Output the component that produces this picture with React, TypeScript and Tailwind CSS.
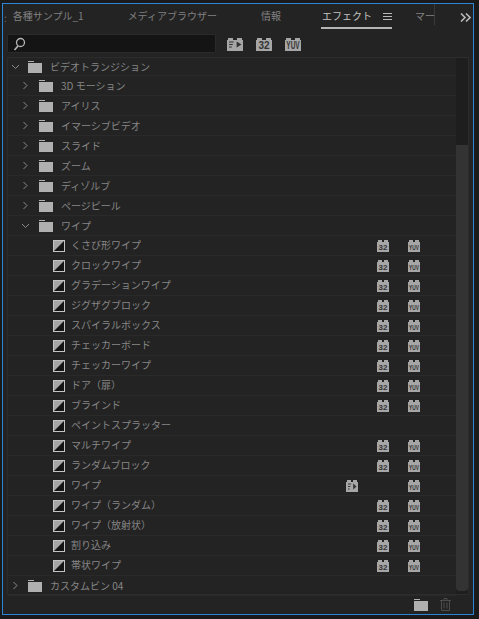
import React from "react";

const font = { fontFamily: '"Noto Sans CJK JP", "Noto Sans", sans-serif' };

function Lego({ w = 12, h = 13, label, fill = "#a6a6a6", size = 7, ink = "#333333", sx = 1 }: { w?: number; h?: number; label: string; fill?: string; size?: number; ink?: string; sx?: number }) {
  const t = Math.round(w * 0.4);
  const g = w - t * 2;
  return (
    <svg width={w} height={h} viewBox={`0 0 ${w} ${h}`} className="block">
      <path d={`M0 3H1V1H${t}V3H${t + g}V1H${w - 1}V3H${w}V${h}H0Z`} fill={fill} />
      <text transform={`translate(${w / 2} ${h - 2.5}) scale(${sx} 1)`} textAnchor="middle" fontSize={size} fontFamily="Liberation Sans, sans-serif" fontWeight="700" fill={ink}>{label}</text>
    </svg>
  );
}

function Accel({ w = 12, h = 13, fill = "#a6a6a6" }: { w?: number; h?: number; fill?: string }) {
  const t = Math.round(w * 0.4);
  const g = w - t * 2;
  return (
    <svg width={w} height={h} viewBox={`0 0 ${w} ${h}`} className="block">
      <path d={`M0 3H1V1H${t}V3H${t + g}V1H${w - 1}V3H${w}V${h}H0Z`} fill={fill} />
      <path d={`M2 5H${w * 0.42}M2 7.5H${w * 0.36}M2 10H${w * 0.3}`} stroke="#333333" strokeWidth="1" />
      <path d={`M${w * 0.6} 4.5L${w - 1.5} 7.5L${w * 0.6} 10.5Z`} fill="#333333" />
    </svg>
  );
}

function Folder() {
  return (
    <svg width={14} height={12} viewBox="0 0 14 12" className="block shrink-0">
      <rect x="0" y="0" width="6" height="1" fill="#b0b0b0" />
      <rect x="0" y="2" width="14" height="10" fill="#b0b0b0" />
    </svg>
  );
}

function Preset() {
  return (
    <svg width={12} height={12} viewBox="0 0 12 12" className="block shrink-0">
      <rect x="0.5" y="0.5" width="11" height="11" fill="#141414" stroke="#c4c4c4" />
      <path d="M1 1H11L1 11Z" fill="#a6a6a6" />
    </svg>
  );
}

function Chevron({ open }: { open: boolean }) {
  return (
    <svg width={9} height={9} viewBox="0 0 9 9" className="block shrink-0">
      {open ? (
        <path d="M1 3L4.5 6.5L8 3" fill="none" stroke="#8a8a8a" strokeWidth="1" />
      ) : (
        <path d="M2.5 1L6 4.5L2.5 8" fill="none" stroke="#8a8a8a" strokeWidth="1" />
      )}
    </svg>
  );
}

function FolderRow({ level, open, label, first }: { level: number; open: boolean; label: string; first?: boolean }) {
  return (
    <div className={`flex shrink-0 items-center border-b border-[#2a2a2a] ${first ? "h-[18px]" : "h-5"} ${level === 0 ? "pl-[3px]" : "pl-[13px]"}`}>
      <Chevron open={open} />
      <div className={level === 0 ? "ml-[8px]" : "ml-[9px]"}><Folder /></div>
      <span className="ml-[8px] text-[10px] leading-none text-[#868686]">{label}</span>
    </div>
  );
}

function EffectRow({ label, acc, b32, yuv }: { label: string; acc?: boolean; b32?: boolean; yuv?: boolean }) {
  return (
    <div className="flex h-5 shrink-0 items-center border-b border-[#2a2a2a] pl-[45px]">
      <Preset />
      <span className="mb-[1px] ml-[6px] w-[273px] text-[10px] leading-none text-[#868686]">{label}</span>
      <div className="w-[33px] pl-[2px]">{acc && <Accel />}</div>
      <div className="w-[31px]">{b32 && <Lego label="32" size={8} />}</div>
      <div className="w-[12px]">{yuv && <Lego label="YUV" size={8} sx={0.6} />}</div>
    </div>
  );
}

const folders = ["3D モーション", "アイリス", "イマーシブビデオ", "スライド", "ズーム", "ディゾルブ", "ページピール"];
const wipes = ["くさび形ワイプ", "クロックワイプ", "グラデーションワイプ", "ジグザグブロック", "スパイラルボックス", "チェッカーボード", "チェッカーワイプ", "ドア（扉）", "ブラインド"];
const wipes2 = ["ワイプ（ランダム）", "ワイプ（放射状）", "割り込み", "帯状ワイプ"];

export default function App() {
  return (
    <div className="h-[619px] w-[479px] overflow-hidden bg-[#1a1a1a] pl-[2px] pt-[3px]" style={font}>
      <div className="flex h-[612px] w-[472px] flex-col border border-[#2d83d4] bg-[#232323]">
        <div className="relative flex h-[26px] shrink-0 items-start text-[10px] leading-none text-[#808080]">
          <span className="ml-[1px] mt-[9px] text-[#666]">:</span>
          <span className="ml-[6px] mt-[7px]">各種サンプル_1</span>
          <span className="ml-[44px] mt-[7px]">メディアブラウザー</span>
          <span className="ml-[44px] mt-[7px]">情報</span>
          <div className="ml-[40px] flex h-[25px] w-[71px] items-start border-b-[2px] border-[#b5b5b5] pl-[1px] pt-[7px]">
            <span className="text-[#c4c4c4]">エフェクト</span>
            <svg width={9} height={8} viewBox="0 0 9 8" className="ml-[11px] mt-[2px]"><path d="M0 .5H9M0 3.5H9M0 6.5H9" stroke="#b8b8b8" /></svg>
          </div>
          <span className="ml-[23px] h-[21px] w-[20px] whitespace-nowrap border-r border-[#3a3a3a] pt-[7px] text-[#808080]">マー</span>
          <svg width={11} height={9} viewBox="0 0 11 9" className="ml-[25px] mt-[9px]"><path d="M1 .5L5 4.5L1 8.5M6 .5L10 4.5L6 8.5" fill="none" stroke="#b8b8b8" strokeWidth="1.6" /></svg>
        </div>
        <div className="flex h-[27px] shrink-0 items-center pl-[4px]">
          <div className="flex h-[19px] w-[209px] items-center rounded-[2px] border border-[#2a2a2a] bg-[#141414] pl-[5px]">
            <svg width={13} height={14} viewBox="0 0 13 14"><circle cx="7.5" cy="5.5" r="4" fill="none" stroke="#b5b5b5" strokeWidth="1.3" /><path d="M5 9L1.5 13" stroke="#b5b5b5" strokeWidth="1.7" /></svg>
          </div>
          <div className="ml-[11px]"><Accel w={16} h={14} /></div>
          <div className="ml-[13px]"><Lego w={16} h={14} label="32" size={10} /></div>
          <div className="ml-[13px]"><Lego w={16} h={14} label="YUV" size={10} sx={0.65} /></div>
        </div>
        <div className="mx-[4px] flex h-[538px] w-[462px] shrink-0 border border-[#2c2c2c]">
          <div className="flex flex-1 flex-col">
            <FolderRow level={0} open label="ビデオトランジション" first />
            {folders.map((f) => <FolderRow key={f} level={1} open={false} label={f} />)}
            <FolderRow level={1} open label="ワイプ" />
            {wipes.map((l) => <EffectRow key={l} label={l} b32 yuv />)}
            <EffectRow label="ペイントスプラッター" />
            <EffectRow label="マルチワイプ" b32 yuv />
            <EffectRow label="ランダムブロック" b32 yuv />
            <EffectRow label="ワイプ" acc yuv />
            {wipes2.map((l) => <EffectRow key={l} label={l} b32 yuv />)}
            <FolderRow level={0} open={false} label="カスタムビン 04" />
          </div>
          <div className="flex w-[12px] flex-col bg-[#1e1e1e] pb-[3px] pt-[87px]">
            <div className="flex-1 rounded-b-[4px] bg-[#333333]" />
          </div>
        </div>
        <div className="flex flex-1 items-center justify-end pr-[22px]">
          <Folder />
          <svg width={11} height={13} viewBox="0 0 11 13" className="ml-[12px]"><path d="M0 2.5H11M4 2.5V.5H7V2.5M1.5 2.5V12.5H9.5V2.5M4 4.5V10.5M7 4.5V10.5" fill="none" stroke="#4c4c4c" /></svg>
        </div>
      </div>
    </div>
  );
}
